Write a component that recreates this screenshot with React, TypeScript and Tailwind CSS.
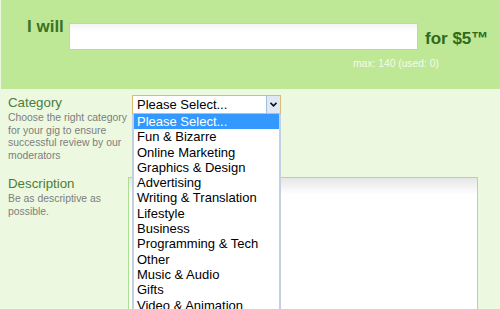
import React from 'react';

const categories = [
    'Please Select...',
    'Fun & Bizarre',
    'Online Marketing',
    'Graphics & Design',
    'Advertising',
    'Writing & Translation',
    'Lifestyle',
    'Business',
    'Programming & Tech',
    'Other',
    'Music & Audio',
    'Gifts',
    'Video & Animation',
];

export default function App() {
    return (
        <div className="w-[500px] h-[309px] overflow-hidden bg-[#ecf9e0] font-['Liberation_Sans',Arial,sans-serif]">
            {/* title band */}
            <div className="ml-[1px] h-[89px] bg-[#bee896] relative">
                <div className="flex items-start pt-[17px]">
                    <span className="ml-[26px] w-[42px] text-[17px] font-bold text-[#3b7325] leading-[20px]">I will</span>
                    <div className="mt-[6px] w-[349px] h-[27px] border border-[#c3cbe0] bg-gradient-to-b from-[#f4f4f4] to-white to-[30%]" />
                    <span className="ml-[7px] mt-[12px] text-[17px] font-bold text-[#2f6a1c] leading-[20px]">for $5™</span>
                </div>
                <div className="pl-[352px] pt-[8px] text-[10.3px] text-[#f4faee] leading-[12px]">max: 140 (used: 0)</div>
            </div>

            {/* form rows */}
            <div className="relative flex pl-[8px] pt-[6px]">
                <div className="w-[124px] shrink-0">
                    <div className="text-[13.3px] text-[#4f7d39] leading-[16px]">Category</div>
                    <p className="mt-[1px] text-[10.4px] text-[#7d7d7d] leading-[12.5px] w-[122px]">
                        Choose the right category for your gig to ensure successful review by our moderators
                    </p>
                    <div className="mt-[14px] text-[13.3px] text-[#4f7d39] leading-[16px]">Description</div>
                    <p className="mt-[1px] text-[10.4px] text-[#7d7d7d] leading-[12.5px] w-[110px]">
                        Be as descriptive as possible.
                    </p>
                </div>
                <div className="relative flex-1">
                    {/* select */}
                    <div className="ml-[0px] w-[149px] h-[19px] border border-[#dcbc6e] bg-white flex items-center">
                        <span className="flex-1 pl-[4px] text-[13px] text-black leading-[15px]">Please Select...</span>
                        <span className="w-[14px] h-[17px] bg-[#dfe9f6] border-l border-[#a7bcd8] flex items-center justify-center">
                            <svg width="7" height="5" viewBox="0 0 7 5">
                                <path d="M0.5 0.8 L3.5 3.8 L6.5 0.8" fill="none" stroke="#111" strokeWidth="1.6" />
                            </svg>
                        </span>
                    </div>
                    {/* description textarea */}
                    <div className="mt-[63px] -ml-[4px] w-[350px] h-[140px] border border-[#a9e08e] bg-gradient-to-b from-[#e6e6e6] to-white to-[12%]" />

                    {/* open dropdown list */}
                    <ul className="absolute left-0 top-[19px] w-[149px] bg-white border-x-2 border-[#c2d0e2] border-b">
                        {categories.map((c, i) => (
                            <li
                                key={c}
                                className={
                                    i === 0
                                        ? 'h-[15.3px] pl-[3px] text-[13px] leading-[15px] bg-[#3399ff] text-white'
                                        : 'h-[15.3px] pl-[3px] text-[13px] leading-[15px] text-black'
                                }
                            >
                                {c}
                            </li>
                        ))}
                    </ul>
                </div>
            </div>
        </div>
    );
}
